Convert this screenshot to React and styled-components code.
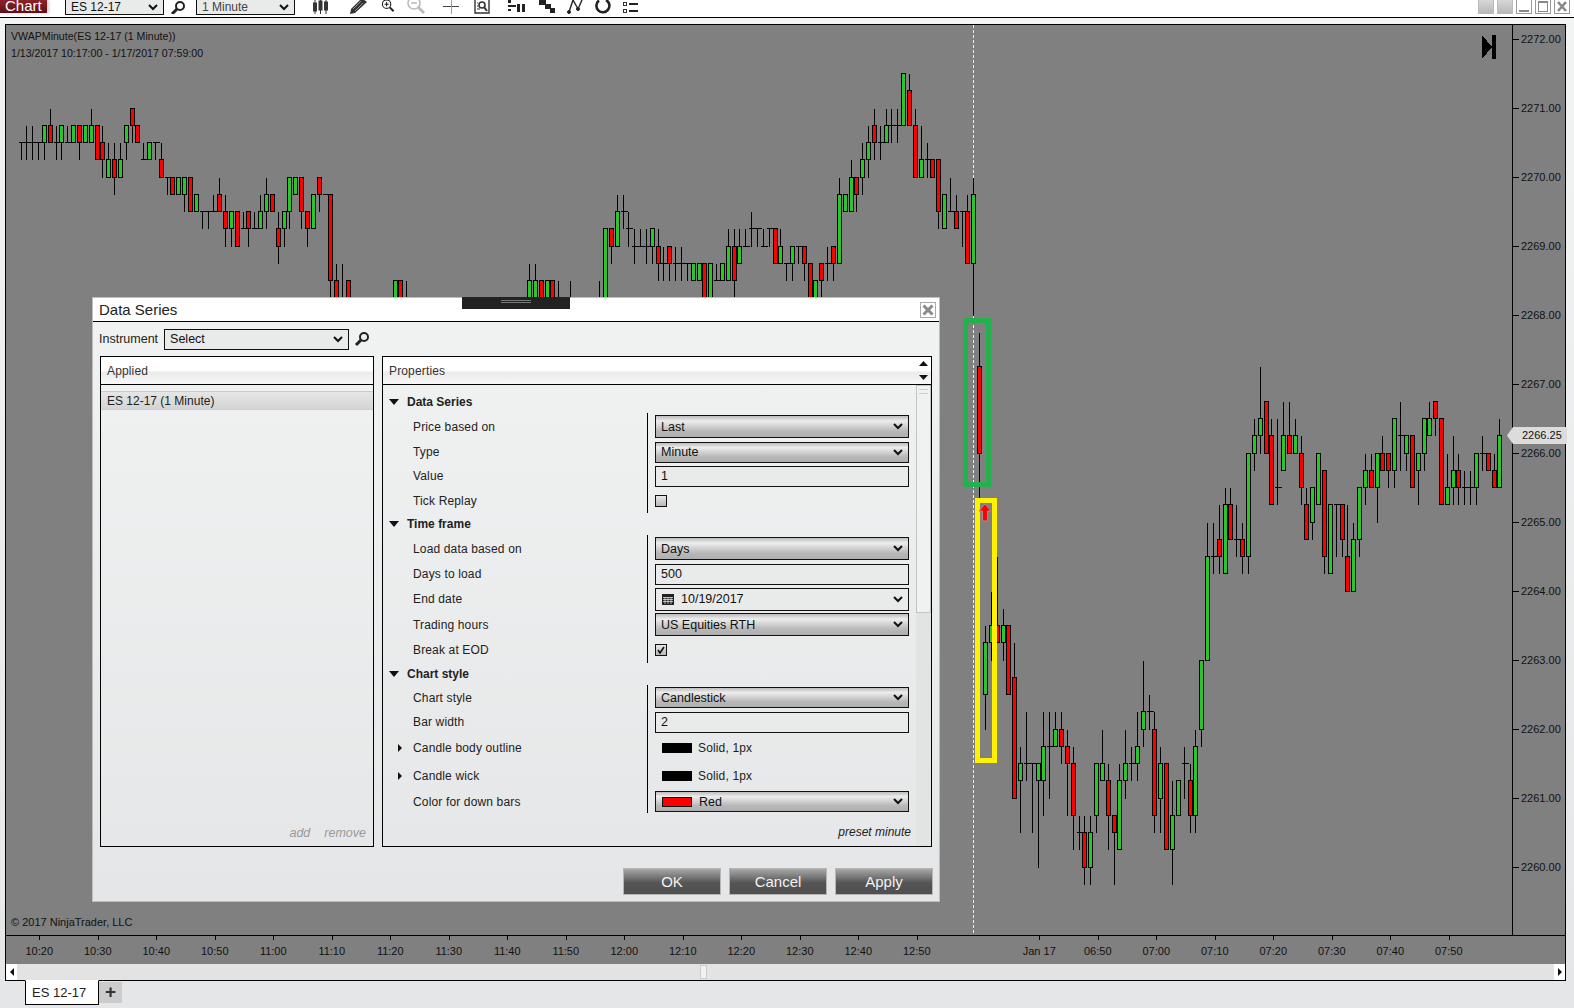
import styled, { createGlobalStyle } from "styled-components";

const GlobalStyle = createGlobalStyle`
  html, body { margin: 0; padding: 0; background: #e5e6e7; }
  body { font-family: "Liberation Sans", Arial, sans-serif; color: #111; }
  * { box-sizing: border-box; }
`;

// candle: x in zoom units, kind, body top/bottom, wick top/bottom. Levels are quarter points below 2272
const left = [
  [64,"d",6,6,6,7],[79,"d",6,6,5,7],[97,"d",6,6,5,7],[115,"d",6,6,6,7],[133,"g",5,6,5,7],[151,"r",5,6,4,6],
  [169,"d",6,6,5,7],[184,"g",5,6,5,7],[202,"d",6,6,5,6],[220,"g",5,6],[238,"r",5,6,5,7],[256,"g",5,6],
  [274,"g",5,6,4,6],[290,"r",5,7],[307,"r",6,7,5,8],[325,"g",7,8,6,8],[343,"r",7,8,6,9],[361,"g",7,8,6,8],
  [379,"g",5,6,5,7],[397,"r",4,5,4,6],[412,"r",5,6],[430,"d",7,7,6,7],[448,"g",6,7],[466,"d",6,6,6,7],
  [484,"r",7,8,6,8],[502,"d",8,8,8,9],[517,"r",8,9],[535,"g",8,9],[553,"g",8,9,8,10],[571,"r",8,10],
  [589,"g",9,10],[607,"d",10,10,10,11],[625,"d",10,10,10,11],[640,"d",10,10,9,10],[658,"r",9,10,8,10],
  [676,"r",10,11,9,12],[694,"g",10,11,10,12],[712,"r",10,12],[730,"d",11,11,10,11],[745,"r",10,11,10,12],
  [763,"d",11,11,10,11],[781,"g",10,11,9,11],[799,"g",9,10,8,11],[817,"r",9,10],[835,"r",11,12,10,13],
  [853,"g",10,11,10,12],[868,"g",8,10,8,11],[886,"g",8,9],[904,"r",8,10,8,11],[922,"r",10,11,10,12],
  [940,"g",9,11],[958,"r",8,9,8,10],[976,"d",9,9],[991,"r",9,14,9,16],[1009,"r",14,16,13,16],
  [1027,"d",15,15,13,15],[1045,"r",14,16],[1167,"d",15,15],[1185,"g",14,16],[1201,"r",14,16],
  [1219,"d",15,15,14,15],[1237,"d",15,15],[1255,"d",15,15],[1440,"d",15,15],[1458,"d",15,15],[1476,"d",15,15],[1494,"d",15,15],
];

const middle = [
  [88,"g",14,15,13,15],[106,"g",14,15,13,15],[124,"r",14,15],[142,"g",14,15],[157,"r",14,15],[175,"d",15,15,14,15],
  [193,"d",15,15],[211,"d",15,15,14,15],[246,"d",15,15],[262,"d",15,15],[280,"d",15,15],[298,"d",15,15,14,15],
  [316,"g",11,15],[334,"r",11,12,11,13],[352,"g",10,12,9,12],[370,"d",10,10,9,11],[385,"d",11,11,10,12],
  [403,"d",12,12,11,13],[421,"d",12,12,11,12],[439,"d",12,12,11,13],[457,"g",11,12,11,13],[475,"r",12,13,11,14],
  [490,"d",13,13,12,14],[508,"r",12,13,12,14],[526,"d",13,13,12,14],[544,"d",13,13,12,14],[562,"d",13,13,13,14],
  [580,"g",13,14],[598,"g",13,14],[613,"r",13,16],[631,"g",13,16],[649,"d",14,14,13,14],[667,"g",13,14],
  [685,"g",12,14,11,14],[703,"r",12,14,11,16],[718,"g",12,13,11,13],[736,"d",12,12,11,12],[754,"d",11,11,10,12],
  [772,"d",11,11,11,12],[790,"d",12,12,11,12],[808,"d",11,11,11,12],[826,"r",11,13],[841,"g",12,13,11,13],
  [859,"d",13,13,13,14],[877,"g",12,13,12,14],[895,"d",12,12,12,13],[913,"r",12,13,12,14],[931,"r",13,16],
  [946,"g",14,16],[964,"r",13,14,13,16],[982,"d",13,13,12,14],[1000,"r",12,13,12,14],[1018,"g",9,13,8,13],
  [1036,"g",9,10],[1054,"g",8,10,7,10],[1069,"r",8,9,8,10],[1087,"g",7,8,6,9],[1105,"g",6,7,5,8],
  [1123,"r",5,6,4,7],[1141,"d",6,6,5,7],[1159,"g",5,6,4,6],[1174,"d",5,5,4,6],[1192,"d",5,5,4,6],[1210,"g",2,5],
  [1228,"r",3,5,2,5],[1246,"r",5,8,4,8],[1264,"g",7,8,5,8],[1282,"d",7,7,6,8],[1297,"r",7,8],[1315,"r",7,10,7,11],
  [1333,"g",9,11],[1351,"d",10,10,8,10],[1369,"r",10,11,9,11],[1387,"d",10,10,10,12],[1402,"r",10,13,9,13],
  [1420,"g",9,13,8,16],
];

const drop = [
  [88,"r",19,24,17,27],[106,"g",35,38,34,40],[124,"g",34,35,32,36],[142,"r",34,35,30,35],[160,"g",34,35,33,36],
  [175,"r",34,38],[193,"r",37,44,35,44],[211,"g",42,43,41,46],[229,"d",42,42,39,43],[247,"d",42,42,42,46],
  [265,"g",42,43,42,48],[280,"g",41,43,39,45],[298,"d",41,41,39,44],[316,"g",40,41,39,41],[334,"r",40,41,39,42],
  [352,"r",41,42,40,45],[370,"r",42,45,41,47],[388,"d",46,46,45,47],[403,"r",46,48,45,49],[421,"g",46,48,45,49],
  [439,"g",42,45,42,46],[457,"g",42,43,40,43],[475,"r",43,45,42,47],[493,"r",45,46,45,49],[508,"g",43,47,42,47],
  [526,"g",42,43,40,44],[544,"d",42,42,41,43],[562,"g",41,42,39,43],[580,"g",39,40,36,41],[598,"d",39,39,38,40],
  [613,"r",40,45,39,46],[631,"g",42,44,41,46],[649,"r",42,47],[667,"g",45,47,43,49],[685,"g",43,45],
  [703,"d",42,42,41,44],[721,"r",43,45,42,46],[736,"g",41,45,40,46],[754,"g",36,40,36,41],
];

const right = [
  [82,"g",30,36,28,36],[100,"d",30,30,28,31],[118,"r",29,30,27,31],[136,"g",27,31,26,31],[151,"r",27,29,26,29],
  [169,"d",29,29,27,30],[187,"r",29,30,28,31],[205,"g",24,30,24,31],[223,"g",23,24,22,25],[241,"g",22,23,19,24],
  [259,"r",21,24],[274,"r",23,27,22,27],[292,"d",26,26,22,27],[310,"g",23,25,21,25],[328,"r",23,24,21,24],
  [346,"g",23,24,22,24],[364,"r",24,26,23,27],[379,"r",27,29,26,29],[397,"g",26,28,26,29],[415,"g",24,27],
  [433,"r",25,30,25,31],[451,"g",27,31],[469,"d",27,27,27,30],[487,"r",27,29,27,30],[502,"r",30,32,27,32],
  [520,"g",29,32,28,32],[538,"g",26,29,26,30],[556,"g",25,26,24,27],[574,"r",25,26,24,26],[592,"g",24,26,24,28],
  [607,"r",24,25,23,25],[625,"r",24,25,24,26],[643,"g",22,25,22,26],[661,"d",23,23,21,25],[679,"g",23,24,23,25],
  [697,"r",23,26],[715,"g",24,25,24,27],[733,"g",22,24,22,25],[748,"g",22,23,21,23],[766,"r",21,22,21,23],
  [784,"r",22,27],[802,"g",26,27,24,27],[820,"g",25,26,23,27],[835,"r",25,26,24,27],[853,"d",26,26,25,27],
  [871,"d",26,26,25,27],[889,"g",24,26,24,27],[907,"d",24,24,23,25],[925,"r",24,25],[943,"r",25,26,24,26],
  [958,"g",23,26,22,26],
];

const candles = [
  ...left.map((c) => [Math.round(c[0] / 3), ...c.slice(1)]),
  ...[480, 486, 492, 498].map((x) => [x, "d", 15, 15]),
  ...middle.map((c) => [500 + Math.round(c[0] / 3), ...c.slice(1)]),
  ...drop.map((c) => [950 + Math.round(c[0] / 3), ...c.slice(1)]),
  ...right.map((c) => [1180 + Math.round(c[0] / 3), ...c.slice(1)]),
];

const levelY = (t) => Math.floor(39 + 17.25 * t) + 0.5;
const fills = { g: "#28c828", r: "#ff0000" };

function Candle({ x, kind, top, bottom, wickTop = top, wickBottom = bottom }) {
  const cx = x + 0.5;
  return (
    <g>
      <line x1={cx} x2={cx} y1={levelY(wickTop)} y2={levelY(wickBottom)} stroke="#000" />
      {kind === "d" ? (
        <line x1={cx - 3} x2={cx + 4} y1={levelY(top)} y2={levelY(top)} stroke="#000" />
      ) : (
        <rect
          x={cx - 2}
          width={4}
          y={levelY(top)}
          height={levelY(bottom) - levelY(top)}
          fill={fills[kind]}
          stroke="#000"
        />
      )}
    </g>
  );
}

function ChartDrawing() {
  return (
    <PlotSvg viewBox="6 25 1506 910" shapeRendering="crispEdges">
      <line x1="973.5" x2="973.5" y1="25" y2="935" stroke="#fff" strokeDasharray="3 2" opacity="0.9" />
      {candles.map(([x, kind, top, bottom, wickTop, wickBottom], i) => (
        <Candle key={i} x={x} kind={kind} top={top} bottom={bottom} wickTop={wickTop} wickBottom={wickBottom} />
      ))}
      <rect x="965.5" y="320.5" width="22.5" height="164" fill="none" stroke="#22b14c" strokeWidth="5" />
      <rect x="977.5" y="500" width="17" height="260" fill="none" stroke="#fff200" strokeWidth="5" />
      <path
        d="M985 504 L991 511 H987.5 V521 H982.5 V511 H979 Z"
        fill="#ff0000"
        stroke="#b08a8a"
        shapeRendering="auto"
      />
      <path d="M1482 35 L1492 47 L1482 59 Z M1492 35 H1496 V59 H1492 Z" fill="#000" />
    </PlotSvg>
  );
}

const Chevron = () => (
  <ChevronSvg viewBox="0 0 10 7">
    <path d="M1 1 L5 5 L9 1" fill="none" stroke="#111" strokeWidth="2" />
  </ChevronSvg>
);

const Search = ({ size = 16 }) => (
  <svg width={size} height={size} viewBox="0 0 16 16">
    <circle cx="10" cy="6" r="4" fill="none" stroke="#222" strokeWidth="2" />
    <path d="M7 9 L2 14" stroke="#222" strokeWidth="3" />
  </svg>
);

const toolIcons = [
  {
    w: 30,
    d: (
      <g fill="#333" stroke="#333">
        <path d="M5 0 V14 M10.5 0 V14 M16 0 V14" fill="none" />
        <rect x="3.5" y="3" width="3" height="8" />
        <rect x="9" y="1" width="3" height="9" />
        <rect x="14.5" y="2" width="3" height="8" />
      </g>
    ),
  },
  {
    w: 46,
    d: (
      <g>
        <path d="M3 9 L12 0 L15 -1 L19 2 L7 13 L2 14 Z" fill="#333" />
        <path d="M5 9 L13 1 M7 11 L15 3" stroke="#bbb" fill="none" strokeWidth="0.7" />
      </g>
    ),
  },
  {
    w: 14,
    d: (
      <g fill="none" stroke="#222" strokeWidth="1.6">
        <circle cx="8" cy="3" r="6" />
        <path d="M12.5 7.5 L18 13" strokeWidth="2.8" />
        <path d="M5 3 H11 M8 0 V6" />
      </g>
    ),
  },
  {
    w: 42,
    d: (
      <g fill="none" stroke="#bbb" strokeWidth="1.6">
        <circle cx="8" cy="3" r="6" />
        <path d="M12.5 7.5 L18 13" strokeWidth="2.8" />
        <path d="M5 3 H11" />
      </g>
    ),
  },
  {
    w: 28,
    d: (
      <g fill="none">
        <path d="M2 6.5 H18" stroke="#444" />
        <path d="M10.5 0 V14" stroke="#8aa0c0" />
      </g>
    ),
  },
  {
    w: 34,
    d: (
      <g fill="none" stroke="#333">
        <path d="M3 0 V13 H17 V0" strokeWidth="1.4" />
        <circle cx="10" cy="5" r="3" strokeWidth="1.6" />
        <path d="M12 7 L15 11" strokeWidth="2" />
        <path d="M5 3 H6 M5 6 H6 M5 9 H8" />
      </g>
    ),
  },
  {
    w: 34,
    d: (
      <g fill="#222">
        <rect x="2" y="0" width="3" height="3" />
        <rect x="2" y="5" width="8" height="2" />
        <rect x="2" y="9" width="3" height="2" />
        <rect x="11" y="4" width="3" height="8" />
        <rect x="16" y="4" width="3" height="8" />
      </g>
    ),
  },
  {
    w: 28,
    d: (
      <g fill="#222">
        <rect x="2" y="0" width="7" height="5" />
        <rect x="8" y="4" width="6" height="5" />
        <rect x="13" y="8" width="5" height="5" />
      </g>
    ),
  },
  {
    w: 28,
    d: (
      <g fill="#222" stroke="#222">
        <path d="M4 12 L8 0 L13 9 L17 0" fill="none" strokeWidth="1.4" />
        <circle cx="4" cy="12" r="1.5" />
        <circle cx="13" cy="9" r="1.5" />
      </g>
    ),
  },
  {
    w: 28,
    d: (
      <g fill="none" stroke="#222" strokeWidth="2.6">
        <path d="M13 0 A6.5 6.5 0 1 1 6 0.5" />
      </g>
    ),
  },
  {
    w: 26,
    d: (
      <g>
        <rect x="3.5" y="2.5" width="3" height="3" fill="none" stroke="#333" />
        <rect x="3.5" y="9.5" width="3" height="3" fill="none" stroke="#333" />
        <rect x="9" y="3" width="9" height="2" fill="#222" />
        <rect x="9" y="10" width="9" height="2" fill="#222" />
      </g>
    ),
  },
];

const prices = ["2272.00", "2271.00", "2270.00", "2269.00", "2268.00", "2267.00", "2266.00", "2265.00", "2264.00", "2263.00", "2262.00", "2261.00", "2260.00"];
const timesBefore = ["10:20", "10:30", "10:40", "10:50", "11:00", "11:10", "11:20", "11:30", "11:40", "11:50", "12:00", "12:10", "12:20", "12:30", "12:40", "12:50"];
const timesAfter = ["Jan 17", "06:50", "07:00", "07:10", "07:20", "07:30", "07:40", "07:50"];

function Field({ label, h, caret, children }) {
  return (
    <Row $h={h}>
      <RowLabel>
        <CaretBox>{caret && <SmallCaret />}</CaretBox>
        {label}
      </RowLabel>
      <RowControl>{children}</RowControl>
    </Row>
  );
}

function DropDown({ h = 21, children }) {
  return (
    <SelectBox $h={h}>
      <SelectText>{children}</SelectText>
      <Chevron />
    </SelectBox>
  );
}

function Heading({ children }) {
  return (
    <SectionHead>
      <DownCaret />
      {children}
    </SectionHead>
  );
}

export default function App() {
  return (
    <Page>
      <GlobalStyle />
      <Toolbar>
        <ChartTab>Chart</ChartTab>
        <ToolSelect $ml={18}>
          ES 12-17
          <Chevron />
        </ToolSelect>
        <ToolSearch>
          <Search size={16} />
        </ToolSearch>
        <ToolSelect $ml={0} $muted>
          1 Minute
          <Chevron />
        </ToolSelect>
        <ToolIcons>
          {toolIcons.map((icon, i) => (
            <ToolIcon key={i} $w={icon.w}>
              <svg width="20" height="14" viewBox="0 0 20 14">
                {icon.d}
              </svg>
            </ToolIcon>
          ))}
        </ToolIcons>
        <WinButtons>
          <WinButton $grey />
          <WinButton $grey />
          <WinButton>
            <svg width="14" height="14" viewBox="0 0 14 14">
              <rect x="2" y="10" width="10" height="2" fill="#888" />
            </svg>
          </WinButton>
          <WinButton>
            <svg width="14" height="14" viewBox="0 0 14 14">
              <rect x="2.5" y="1.5" width="9" height="10" fill="none" stroke="#888" />
              <rect x="2" y="1" width="10" height="2" fill="#888" />
            </svg>
          </WinButton>
          <WinButton>
            <svg width="14" height="14" viewBox="0 0 14 14">
              <path d="M3 2 L11 11 M11 2 L3 11" stroke="#888" strokeWidth="2.6" />
            </svg>
          </WinButton>
        </WinButtons>
      </Toolbar>

      <Frame>
        <ChartRow>
          <Plot>
            <ChartDrawing />
            <ChartInfo>
              <div>VWAPMinute(ES 12-17 (1 Minute))</div>
              <div>1/13/2017 10:17:00 - 1/17/2017 07:59:00</div>
            </ChartInfo>
            <Copyright>© 2017 NinjaTrader, LLC</Copyright>
          </Plot>
          <PriceAxis>
            {prices.map((p) => (
              <PriceLabel key={p}>{p}</PriceLabel>
            ))}
            <PriceTag>2266.25</PriceTag>
          </PriceAxis>
        </ChartRow>
        <TimeAxis>
          {timesBefore.map((t) => (
            <TimeSlot key={t}>{t}</TimeSlot>
          ))}
          <TimeGap />
          {timesAfter.map((t) => (
            <TimeSlot key={t}>{t}</TimeSlot>
          ))}
        </TimeAxis>
        <HScroll>
          <ScrollEnd>
            <svg width="6" height="8" viewBox="0 0 6 8">
              <path d="M5 0 V8 L1 4 Z" fill="#111" />
            </svg>
          </ScrollEnd>
          <HThumb />
          <ScrollEnd>
            <svg width="6" height="8" viewBox="0 0 6 8">
              <path d="M1 0 V8 L5 4 Z" fill="#111" />
            </svg>
          </ScrollEnd>
        </HScroll>
      </Frame>

      <TabRow>
        <Tab>ES 12-17</Tab>
        <AddTab>+</AddTab>
      </TabRow>

      <Dialog>
        <DragBar>
          <DragGrip />
        </DragBar>
        <TitleBar>
          <Title>Data Series</Title>
          <CloseButton>
            <svg width="12" height="12" viewBox="0 0 12 12">
              <path d="M1.5 1.5 L10.5 10.5 M10.5 1.5 L1.5 10.5" stroke="#8a8a8a" strokeWidth="3" />
            </svg>
          </CloseButton>
        </TitleBar>
        <InstrumentRow>
          <InstrumentLabel>Instrument</InstrumentLabel>
          <InstrumentSelect>
            Select
            <Chevron />
          </InstrumentSelect>
          <Search size={16} />
        </InstrumentRow>
        <Panels>
          <AppliedPanel>
            <PanelHead>Applied</PanelHead>
            <AppliedItem>ES 12-17 (1 Minute)</AppliedItem>
            <AppliedActions>
              <span>add</span>
              <span>remove</span>
            </AppliedActions>
          </AppliedPanel>
          <PropertiesPanel>
            <PanelHead>
              Properties
              <HeadArrows>
                <svg width="9" height="5" viewBox="0 0 9 5">
                  <path d="M0 5 L4.5 0 L9 5 Z" fill="#111" />
                </svg>
                <svg width="9" height="5" viewBox="0 0 9 5">
                  <path d="M0 0 L4.5 5 L9 0 Z" fill="#111" />
                </svg>
              </HeadArrows>
            </PanelHead>
            <PropsBody>
              <PropsList>
                <Heading>Data Series</Heading>
                <Field label="Price based on" h={27}>
                  <DropDown h={23}>Last</DropDown>
                </Field>
                <Field label="Type" h={24}>
                  <DropDown>Minute</DropDown>
                </Field>
                <Field label="Value" h={24}>
                  <TextBox>1</TextBox>
                </Field>
                <Field label="Tick Replay" h={25}>
                  <CheckBox />
                </Field>
                <Heading>Time frame</Heading>
                <Field label="Load data based on" h={27}>
                  <DropDown h={23}>Days</DropDown>
                </Field>
                <Field label="Days to load" h={24}>
                  <TextBox>500</TextBox>
                </Field>
                <Field label="End date" h={26}>
                  <DateBox>
                    <SelectText $inset>
                      <svg width="12" height="11" viewBox="0 0 12 11">
                        <rect width="12" height="11" fill="#222" />
                        <path d="M1 3.5 H11 M1 5.5 H11 M1 7.5 H11 M3 3 V10 M6 3 V10 M9 3 V10" stroke="#ddd" strokeWidth="0.8" />
                      </svg>
                      10/19/2017
                    </SelectText>
                    <Chevron />
                  </DateBox>
                </Field>
                <Field label="Trading hours" h={25}>
                  <DropDown h={23}>US Equities RTH</DropDown>
                </Field>
                <Field label="Break at EOD" h={26}>
                  <CheckBox>
                    <svg width="10" height="10" viewBox="0 0 10 10">
                      <path d="M2 5 L4 8 L8 2" fill="none" stroke="#111" strokeWidth="1.6" />
                    </svg>
                  </CheckBox>
                </Field>
                <Heading>Chart style</Heading>
                <Field label="Chart style" h={25}>
                  <DropDown>Candlestick</DropDown>
                </Field>
                <Field label="Bar width" h={24}>
                  <TextBox>2</TextBox>
                </Field>
                <Field label="Candle body outline" h={27} caret>
                  <StrokeInfo>
                    <Swatch $color="#000" />
                    Solid, 1px
                  </StrokeInfo>
                </Field>
                <Field label="Candle wick" h={29} caret>
                  <StrokeInfo>
                    <Swatch $color="#000" />
                    Solid, 1px
                  </StrokeInfo>
                </Field>
                <Field label="Color for down bars" h={23}>
                  <SelectBox $h={21}>
                    <SelectText $inset>
                      <Swatch $color="#ff0000" $outlined />
                      Red
                    </SelectText>
                    <Chevron />
                  </SelectBox>
                </Field>
                <PresetLink>preset minute</PresetLink>
              </PropsList>
              <VScroll>
                <VThumb />
              </VScroll>
            </PropsBody>
          </PropertiesPanel>
        </Panels>
        <Footer>
          <DialogButton>OK</DialogButton>
          <DialogButton>Cancel</DialogButton>
          <DialogButton>Apply</DialogButton>
        </Footer>
      </Dialog>
    </Page>
  );
}

const Page = styled.div`
  position: relative;
  width: 1574px;
  height: 1008px;
  overflow: hidden;
  display: flex;
  flex-direction: column;
  background: linear-gradient(#f2f3f3, #e5e6e7);
`;

const Toolbar = styled.div`
  height: 18px;
  flex: none;
  display: flex;
  align-items: flex-start;
  background: #fff;
  border-bottom: 1px solid #000;
  overflow: hidden;
`;

const ChartTab = styled.div`
  width: 47px;
  height: 13px;
  padding-left: 5px;
  background: linear-gradient(#8c2129, #5f1016);
  color: #fff;
  font-size: 15px;
  line-height: 12px;
  box-shadow: 2px 0 3px #ccc;
`;

const ToolSelect = styled.div`
  width: 99px;
  height: 15px;
  margin-left: ${(p) => p.$ml}px;
  padding: 0 5px;
  display: flex;
  align-items: center;
  justify-content: space-between;
  background: #e9eaea;
  border: 1px solid #111;
  border-top: none;
  font-size: 12px;
  color: ${(p) => (p.$muted ? "#444" : "#111")};
`;

const ToolSearch = styled.div`
  width: 32px;
  height: 14px;
  padding-left: 6px;
  overflow: hidden;
`;

const ToolIcons = styled.div`
  display: flex;
  margin-left: 10px;
`;

const ToolIcon = styled.div`
  width: ${(p) => p.$w}px;
  height: 14px;
  display: flex;
  justify-content: center;
`;

const WinButtons = styled.div`
  margin-left: auto;
  margin-right: 4px;
  display: flex;
  gap: 3px;
`;

const WinButton = styled.div`
  width: 16px;
  height: 14px;
  display: flex;
  justify-content: center;
  background: ${(p) => (p.$grey ? "linear-gradient(#d8d8d8, #b8b8b8)" : "#fff")};
  border: 1px solid ${(p) => (p.$grey ? "#bbb" : "#999")};
  border-top: none;
`;

const Frame = styled.div`
  width: 1561px;
  height: 957px;
  flex: none;
  margin: 6px 0 0 5px;
  display: flex;
  flex-direction: column;
  border: 1px solid #000;
  background: #808080;
`;

const ChartRow = styled.div`
  height: 910px;
  flex: none;
  display: flex;
`;

const Plot = styled.div`
  position: relative;
  width: 1506px;
  height: 910px;
  flex: none;
  overflow: hidden;
`;

const PlotSvg = styled.svg`
  display: block;
  width: 1506px;
  height: 910px;
`;

const ChartInfo = styled.div`
  position: absolute;
  left: 5px;
  top: 3px;
  font-size: 10.6px;
  line-height: 17px;
  color: #111;
`;

const Copyright = styled.div`
  position: absolute;
  left: 5px;
  bottom: 7px;
  font-size: 11px;
  color: #111;
`;

const PriceAxis = styled.div`
  position: relative;
  flex: 1;
  border-left: 1px solid #000;
`;

const PriceLabel = styled.div`
  position: relative;
  height: 69px;
  padding: 7px 0 0 8px;
  font-size: 11px;
  line-height: 14px;
  color: #111;

  &::before {
    content: "";
    position: absolute;
    left: 0;
    top: 14px;
    width: 6px;
    height: 1px;
    background: #000;
  }
`;

const PriceTag = styled.div`
  position: absolute;
  left: -6px;
  top: 402px;
  width: 60px;
  height: 17px;
  padding: 1px 0 0 15px;
  font-size: 11px;
  line-height: 15px;
  background: #dcdcdc;
  clip-path: polygon(0 50%, 6px 0, 100% 0, 100% 100%, 6px 100%);
`;

const TimeAxis = styled.div`
  height: 29px;
  flex: none;
  padding-left: 4px;
  display: flex;
  border-top: 1px solid #000;
`;

const TimeSlot = styled.div`
  position: relative;
  width: 58.5px;
  flex: none;
  padding-top: 8px;
  text-align: center;
  font-size: 11px;
  line-height: 14px;
  color: #111;

  &::before {
    content: "";
    position: absolute;
    left: 50%;
    top: 0;
    width: 1px;
    height: 4px;
    background: #000;
  }
`;

const TimeGap = styled.div`
  width: 64px;
  flex: none;
`;

const HScroll = styled.div`
  flex: 1;
  display: flex;
  background: #e3e3e3;
`;

const ScrollEnd = styled.div`
  width: 11px;
  flex: none;
  display: flex;
  align-items: center;
  justify-content: center;
  background: #fff;
`;

const HThumb = styled.div`
  width: 7px;
  margin: 1px auto 1px 683px;
  background: #f1f1f1;
  border: 1px solid #ccc;
`;

const TabRow = styled.div`
  margin-left: 25px;
  display: flex;
  align-items: flex-start;
`;

const Tab = styled.div`
  width: 74px;
  height: 25px;
  margin-top: -1px;
  padding: 4px 0 0 6px;
  background: #fff;
  border: 1px solid #000;
  border-top-color: #fff;
  font-size: 13px;
  color: #222;
`;

const AddTab = styled.div`
  width: 23px;
  height: 21px;
  margin-top: 1px;
  background: #ccc;
  text-align: center;
  font-size: 19px;
  font-weight: bold;
  line-height: 19px;
  color: #333;
`;

const Dialog = styled.div`
  position: absolute;
  left: 93px;
  top: 298px;
  width: 846px;
  height: 603px;
  display: flex;
  flex-direction: column;
  background: linear-gradient(#f1f2f2, #e5e6e7);
  box-shadow: 0 0 0 1px #bdbdbd;
`;

const DragBar = styled.div`
  position: absolute;
  left: 369px;
  top: -1px;
  width: 108px;
  height: 12px;
  display: flex;
  justify-content: center;
  padding-top: 3px;
  background: #222;
`;

const DragGrip = styled.div`
  width: 30px;
  height: 3px;
  border-top: 1px solid #777;
  border-bottom: 1px solid #777;
`;

const TitleBar = styled.div`
  height: 24px;
  flex: none;
  padding: 0 3px 0 6px;
  display: flex;
  align-items: center;
  justify-content: space-between;
  background: #fff;
  border-bottom: 1px solid #000;
`;

const Title = styled.div`
  font-size: 15px;
  color: #222;
`;

const CloseButton = styled.div`
  width: 16px;
  height: 16px;
  display: flex;
  align-items: center;
  justify-content: center;
  border: 1px solid #aaa;
`;

const InstrumentRow = styled.div`
  height: 34px;
  flex: none;
  padding-left: 6px;
  display: flex;
  align-items: center;
  gap: 6px;
`;

const InstrumentLabel = styled.div`
  font-size: 12.5px;
  color: #222;
`;

const InstrumentSelect = styled.div`
  width: 185px;
  height: 21px;
  margin-right: -1px;
  padding: 0 5px;
  display: flex;
  align-items: center;
  justify-content: space-between;
  background: #e9eaea;
  border: 1px solid #111;
  font-size: 12.5px;
`;

const Panels = styled.div`
  height: 491px;
  flex: none;
  padding-left: 7px;
  display: flex;
  gap: 8px;
`;

const AppliedPanel = styled.div`
  position: relative;
  width: 274px;
  border: 1px solid #000;
`;

const PropertiesPanel = styled.div`
  position: relative;
  width: 550px;
  display: flex;
  flex-direction: column;
  border: 1px solid #000;
`;

const PanelHead = styled.div`
  position: relative;
  height: 28px;
  flex: none;
  padding: 7px 0 0 6px;
  font-size: 12px;
  letter-spacing: 0.15px;
  line-height: 14px;
  color: #333;
  background: linear-gradient(#fff 48%, #ebebeb 58%, #f8f8f8);
  border-bottom: 1px solid #000;
`;

const HeadArrows = styled.div`
  position: absolute;
  right: 3px;
  top: 4px;
  height: 19px;
  display: flex;
  flex-direction: column;
  justify-content: space-between;
`;

const AppliedItem = styled.div`
  height: 19px;
  margin-top: 6px;
  padding-left: 6px;
  font-size: 12px;
  line-height: 18px;
  color: #222;
  background: linear-gradient(#e6e6e6, #d4d4d4);
  border-top: 1px solid #ccc;
  border-bottom: 1px solid #ccc;
`;

const AppliedActions = styled.div`
  position: absolute;
  right: 7px;
  bottom: 6px;
  display: flex;
  gap: 14px;
  font-size: 12.5px;
  font-style: italic;
  color: #999;
`;

const PropsBody = styled.div`
  flex: 1;
  display: flex;
  min-height: 0;
`;

const PropsList = styled.div`
  width: 533px;
  flex: none;
  padding-top: 6px;
`;

const VScroll = styled.div`
  flex: 1;
  background: #e2e3e3;
`;

const VThumb = styled.div`
  position: relative;
  height: 228px;
  background: #f0f1f1;
  border: 1px solid #c4c4c4;

  &::before {
    content: "";
    position: absolute;
    left: 2px;
    right: 2px;
    top: 3px;
    height: 3px;
    border-top: 1px solid #ccc;
    border-bottom: 1px solid #ccc;
  }
`;

const SectionHead = styled.div`
  height: 22px;
  padding-left: 6px;
  display: flex;
  align-items: center;
  gap: 8px;
  font-size: 12px;
  font-weight: bold;
  color: #222;
`;

const DownCaret = styled.span`
  width: 0;
  height: 0;
  border-left: 5px solid transparent;
  border-right: 5px solid transparent;
  border-top: 6px solid #111;
`;

const SmallCaret = styled.span`
  display: block;
  width: 0;
  height: 0;
  margin-left: 2px;
  border-top: 4px solid transparent;
  border-bottom: 4px solid transparent;
  border-left: 4px solid #111;
`;

const CaretBox = styled.span`
  width: 17px;
  flex: none;
`;

const Row = styled.div`
  height: ${(p) => p.$h}px;
  display: flex;
  align-items: stretch;
`;

const RowLabel = styled.div`
  width: 265px;
  flex: none;
  padding-left: 13px;
  display: flex;
  align-items: center;
  font-size: 12px;
  letter-spacing: 0.15px;
  color: #222;
  border-right: 1px solid #000;
`;

const RowControl = styled.div`
  flex: 1;
  min-width: 0;
  padding: 0 7px;
  display: flex;
  align-items: center;
`;

const SelectBox = styled.div`
  width: 254px;
  height: ${(p) => p.$h}px;
  flex: none;
  padding: 0 5px;
  display: flex;
  align-items: center;
  justify-content: space-between;
  font-size: 12.5px;
  background: linear-gradient(#bdbdbd, #ededed 24%, #b8b8b8 72%, #afafaf);
  border: 1px solid #111;
`;

const DateBox = styled(SelectBox)`
  height: 23px;
  background: #e9eaea;
`;

const SelectText = styled.span`
  display: flex;
  align-items: center;
  gap: 7px;
  padding-left: ${(p) => (p.$inset ? "1px" : "0")};
`;

const ChevronSvg = styled.svg`
  width: 10px;
  height: 7px;
  flex: none;
`;

const TextBox = styled.div`
  width: 254px;
  height: 21px;
  flex: none;
  padding: 0 5px;
  display: flex;
  align-items: center;
  font-size: 12.5px;
  background: #e9eaea;
  border: 1px solid #111;
`;

const CheckBox = styled.div`
  width: 12px;
  height: 12px;
  display: flex;
  align-items: center;
  justify-content: center;
  background: linear-gradient(#e8e8e8, #b8b8b8);
  border: 1px solid #111;
`;

const StrokeInfo = styled.div`
  padding-left: 7px;
  display: flex;
  align-items: center;
  gap: 6px;
  font-size: 12px;
  letter-spacing: 0.15px;
  color: #222;
`;

const Swatch = styled.span`
  width: 30px;
  height: 10px;
  flex: none;
  background: ${(p) => p.$color};
  border: ${(p) => (p.$outlined ? "1px solid #111" : "none")};
`;

const PresetLink = styled.div`
  margin-top: 12px;
  padding-right: 5px;
  text-align: right;
  font-size: 12px;
  font-style: italic;
  color: #222;
`;

const Footer = styled.div`
  flex: 1;
  padding: 21px 6px 0 0;
  display: flex;
  justify-content: flex-end;
  align-items: flex-start;
  gap: 8px;
`;

const DialogButton = styled.div`
  width: 98px;
  height: 27px;
  text-align: center;
  font-size: 15px;
  line-height: 26px;
  color: #f2f2f2;
  background: linear-gradient(#a8a8a8, #555 55%, #4f4f4f);
  border: 1px solid #b5b5b5;
`;
